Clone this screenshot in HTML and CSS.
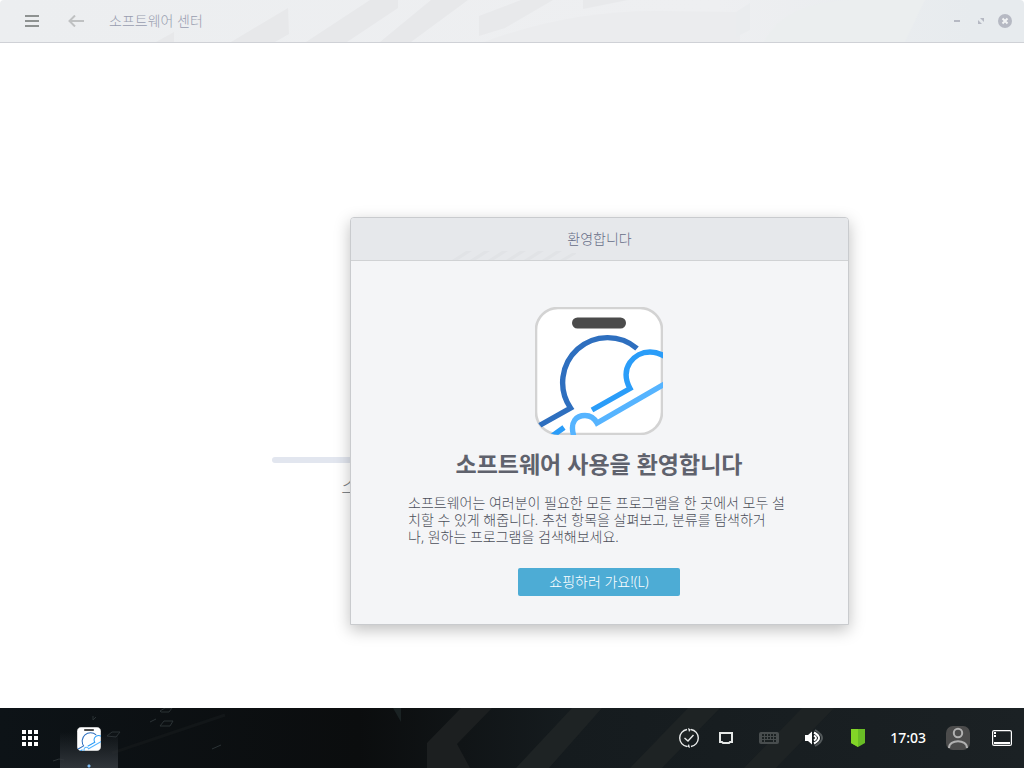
FILE: index.html
```html
<!DOCTYPE html>
<html lang="ko">
<head>
<meta charset="utf-8">
<title>소프트웨어 센터</title>
<link rel="stylesheet" href="styles.css">
</head>
<body>
<svg class="defs" aria-hidden="true">
  <symbol id="store" viewBox="0 0 128 128">
    <defs><clipPath id="card"><rect width="128" height="128" rx="24"/></clipPath></defs>
    <rect x="1" y="1" width="126" height="126" rx="22" fill="#fff" stroke="#d3d3d3" stroke-width="2.6"/>
    <rect x="37" y="10.500" width="54" height="11" rx="5.500" fill="#4b4b4b"/>
    <g clip-path="url(#card)" fill="none" stroke-width="5.400">
      <path d="M0 121 L35.500 101 A45 45 0 0 1 102 41.500" stroke="#2e6fbf"/>
      <path d="M6 137 L29 120.500 M57 103 L95 81.500 C84 61 99 45 115 45 Q124 45 132 51" stroke="#2a9df9"/>
      <path d="M39 130 C34 114 42 108.500 50 108.500 Q58 108.500 62 116 L132 75.500" stroke="#56b4ff"/>
    </g>
  </symbol>
</svg>

<header class="titlebar">
  <svg class="titlebar-art" viewBox="0 0 1024 42" preserveAspectRatio="none" aria-hidden="true">
    <path d="M156 42 174 32V42zM231 42 288 8 289 34 275 42zM306 42 370 0h28v8L347 42zM380 42 431 0h37L411 42z" fill="#e7e8ea"/>
    <path d="M479 16 521 0h32L505 28 479 36zM583 0h45L583 9z" fill="#e8e9eb"/>
    <path d="M484 42Q570 10 660 11L740 12V42z" fill="#ebecee"/>
    <path d="M736 37V12L750 3V30z" fill="#eaecee"/>
    <path d="M764 42Q785 2 850 0H925L905 42z" fill="#ebeeef"/>
  </svg>
  <button class="tool" aria-label="메뉴"><svg width="14" height="12"><path d="M0 1h14M0 6h14M0 11h14" stroke="#8e9291" stroke-width="2"/></svg></button>
  <button class="tool back" aria-label="뒤로"><svg width="16" height="12"><path d="M7 .5 1.500 6 7 11.500M2 6h14" fill="none" stroke="#bfc1c2" stroke-width="2"/></svg></button>
  <h1 class="title">소프트웨어 센터</h1>
  <div class="window-controls">
    <button class="wbtn" aria-label="최소화"><svg width="16" height="16"><path d="M5 8h6" stroke="#b6b9c3" stroke-width="2"/></svg></button>
    <button class="wbtn" aria-label="최대화"><svg width="16" height="16"><path d="M7 5h4v4zM5 7v4h4z" fill="#b6b9c3"/></svg></button>
    <button class="wbtn" aria-label="닫기"><svg width="16" height="16"><circle cx="8" cy="8" r="7" fill="#b6b9c3"/><path d="m5.500 5.500 5 5m0-5-5 5" stroke="#f2f4f5" stroke-width="2"/></svg></button>
  </div>
</header>

<main class="loading">
  <progress class="progress" value="0" max="100" aria-label="진행률"></progress>
  <p class="status">소프트웨어</p>
</main>

<section class="dialog" role="dialog" aria-labelledby="dialog-title">
  <header class="dialog-bar">
    <svg class="dialog-art" width="124" height="9" aria-hidden="true"><path d="M0 9 14 0h6L6 9zM18 9 32 0h6L24 9zM36 9 50 0h6L42 9zM54 9 68 0h6L60 9zM72 9 86 0h6L78 9zM90 9 104 0h6L96 9zM108 9l12-7h4v1l-10 6z" fill="#e1e3e6"/></svg>
    <h2 class="dialog-title" id="dialog-title">환영합니다</h2>
  </header>
  <div class="dialog-body">
    <svg class="store-logo" aria-hidden="true"><use href="#store"/></svg>
    <h3 class="headline">소프트웨어 사용을 환영합니다</h3>
    <p class="message">소프트웨어는 여러분이 필요한 모든 프로그램을 한 곳에서 모두 설<br>치할 수 있게 해줍니다. 추천 항목을 살펴보고, 분류를 탐색하거<br>나, 원하는 프로그램을 검색해보세요.</p>
    <button class="primary">쇼핑하러 가요!(L)</button>
  </div>
</section>

<footer class="taskbar">
  <svg class="taskbar-art" viewBox="0 0 1024 60" preserveAspectRatio="none" aria-hidden="true">
    <path d="M427 35 461 0h31L457 36 470 60H427z" fill="#1c1f20"/>
    <path d="M516 60 572 0h30L549 60zM630 60 688 0h32L662 60zM744 60 802 0h32L776 60z" fill="#1e2324"/>
    <path d="M393 0h8v14z" fill="#1a2223"/>
    <path d="M112 45 225 7" stroke="#121618" stroke-width="3"/>
    <g fill="none" stroke="#2b3235"><path d="M160 3l5-3h7l-3 4h-8zM160 18l4-5h9l-3 5zM150 14l6-3M107 28l5-4h8l-4 5zM53 53l6-2 5 1M212 41l9-4"/><path d="M93 8v4l3-3"/></g>
  </svg>
  <button class="launcher" aria-label="앱 메뉴"><svg width="16" height="16"><path d="M0 0h4v4H0zM6 0h4v4H6zM12 0h4v4h-4zM0 6h4v4H0zM6 6h4v4H6zM12 6h4v4h-4zM0 12h4v4H0zM6 12h4v4H6zM12 12h4v4h-4z" fill="#fff"/></svg></button>
  <button class="task" aria-label="소프트웨어 센터"><svg class="task-icon"><use href="#store"/></svg></button>
  <div class="tray">
    <button class="tray-btn" aria-label="업데이트"><svg width="20" height="20" fill="none" stroke="#e8eaea" stroke-width="1.400"><path d="M8 18.500A8.600 8.600 0 0 1 8 1.500M12 1.500a8.600 8.600 0 0 1 0 17M5.500 10l3.500 3 5.500-6"/><path d="m9 0 3 1.500L10 4zM11 20l-3-1.500L10 16z" fill="#e8eaea" stroke="none"/></svg></button>
    <button class="tray-btn" aria-label="네트워크"><svg width="14" height="12"><path d="M1 1h12v9h-2l-1 1H4l-1-1H1z" fill="none" stroke="#e4e7e6" stroke-width="2"/></svg></button>
    <button class="tray-btn keyboard" aria-label="키보드"><svg width="20" height="12"><rect width="20" height="12" rx="2" fill="#484d4e"/><path d="M3 3h14M3 6h14" stroke="#1b2122" stroke-width="2" stroke-dasharray="2 1"/><path d="M3 9h2m1 0h8m1 0h2" stroke="#1b2122" stroke-width="2"/></svg></button>
    <button class="tray-btn" aria-label="음량"><svg width="18" height="18"><path d="M0 6h3l4-3.500v13L3 12H0z" fill="#fff"/><path d="M9 6.500q4 2.500 0 5M9 3.500q10 5.500 0 11" fill="none" stroke="#fff" stroke-width="2"/><path d="M10 1q14 8 0 16" fill="none" stroke="#53595b" stroke-width="2"/></svg></button>
    <button class="tray-btn shield" aria-label="보안"><svg width="14" height="18"><path d="M0 0h14v14l-7 4-7-4z" fill="#69bd25"/><path d="M0 0h7v18l-7-4z" fill="#82d527"/></svg></button>
    <time class="clock">17:03</time>
    <button class="tray-btn user" aria-label="사용자"><svg width="24" height="24"><rect width="24" height="24" rx="7" fill="#4c4c4c"/><g fill="none" stroke="#b1b1b1" stroke-width="2"><circle cx="12" cy="7" r="4.200"/><path d="M3 22c0-9 18-9 18 0"/></g></svg></button>
    <button class="tray-btn" aria-label="바탕 화면 보기"><svg width="20" height="16"><rect x=".6" y=".6" width="18.800" height="14.800" rx="1.500" fill="none" stroke="#fff" stroke-width="1.200"/><path d="M2 13h16" stroke="#fff" stroke-width="2"/><path d="M2 2h2v2H2zM2 5h2v2H2z" fill="#fff"/></svg></button>
  </div>
</footer>
</body>
</html>
```
FILE: styles.css
```css
* { box-sizing: border-box; }

body {
  margin: 0;
  min-height: 100vh;
  display: flex;
  flex-direction: column;
  position: relative;
  background: #fff;
  font: 300 14px/17px "Noto Sans", "Noto Sans CJK KR", sans-serif;
  color: #4c4f5a;
}

h1, h2, h3, p { margin: 0; font-weight: 300; }
h1, h2 { font-size: 14px; }
svg { display: block; }
.defs { position: absolute; width: 0; height: 0; }

button {
  border: 0;
  padding: 0;
  background: none;
  font: inherit;
  color: inherit;
  display: flex;
  align-items: center;
  justify-content: center;
}

.titlebar {
  position: relative;
  display: flex;
  align-items: center;
  height: 43px;
  padding: 0 11px 0 20px;
  background: linear-gradient(90deg, #eceef0 0%, #eeeff1 70%, #e7ebee 95%);
  border-bottom: 1px solid #cfd1d6;
  border-radius: 4px 4px 0 0;
}

.titlebar > * { position: relative; }

.titlebar .titlebar-art,
.taskbar .taskbar-art {
  position: absolute;
  inset: 0;
  width: 100%;
  height: 100%;
}

.tool { width: 24px; height: 24px; }
.back { margin-left: 20px; }
.title { margin-left: 21px; padding-bottom: 2px; color: #989daf; }
.window-controls { display: flex; gap: 8px; margin-left: auto; }
.wbtn { width: 16px; height: 16px; }

.loading {
  flex: 1;
  display: flex;
  flex-direction: column;
  align-items: center;
  justify-content: center;
  gap: 4px;
  padding-top: 208px;
}

.progress {
  width: 480px;
  height: 6px;
  appearance: none;
  border: 0;
  border-radius: 3px;
  background: #e2e6ef;
  overflow: hidden;
}

.progress::-webkit-progress-bar { background: #e2e6ef; }

.status {
  width: 342px;
  font-size: 24px;
  line-height: 36px;
  color: #808488;
}

.dialog {
  position: absolute;
  top: 217px;
  left: 350px;
  width: 499px;
  background: #f4f5f7;
  border: 1px solid #c9cbce;
  border-radius: 4px 4px 0 0;
  box-shadow: 0 5px 16px rgba(0, 0, 0, 0.25);
}

.dialog-bar {
  position: relative;
  display: flex;
  align-items: center;
  justify-content: center;
  height: 43px;
  background: #e6e8eb;
  border-bottom: 1px solid #d0d2d4;
  border-radius: 3px 3px 0 0;
}

.dialog-art { position: absolute; bottom: 0; left: 101px; }
.dialog-title { position: relative; padding-bottom: 2px; color: #666e87; }

.dialog-body {
  display: flex;
  flex-direction: column;
  align-items: center;
  padding: 46px 49px 28px 48px;
}

.store-logo { width: 128px; height: 128px; }

.headline {
  margin-top: 11px;
  font-size: 23px;
  line-height: 36px;
  font-weight: 700;
  color: #5f626d;
}

.message { width: 382px; margin-top: 12px; white-space: nowrap; }

.primary {
  width: 162px;
  height: 28px;
  margin-top: 23px;
  padding-bottom: 2px;
  border-radius: 2px;
  background: #4dacd5;
  color: #fff;
}

.taskbar {
  position: relative;
  display: flex;
  align-items: center;
  height: 60px;
  padding: 0 12px 0 0;
  background: linear-gradient(90deg, #0d1317, #0b0d0e 35%, #151b1e 55%, #1b2124);
}

.taskbar > * { position: relative; }
.launcher { width: 60px; height: 60px; }

.task {
  width: 58px;
  height: 60px;
  padding-top: 2px;
  background:
    radial-gradient(circle at 50% 58px, #82bdf4 1px, transparent 2px),
    linear-gradient(transparent 40%, #30353a);
}

.task-icon { width: 24px; height: 24px; }

.tray {
  display: flex;
  align-items: center;
  gap: 20px;
  margin-left: auto;
}

.keyboard { margin: 0 6px; }
.shield { margin: 0 5px 0 8px; }
.user { margin-right: 2px; }
.clock { padding-bottom: 2px; color: #fff; font-weight: 500; }
```
